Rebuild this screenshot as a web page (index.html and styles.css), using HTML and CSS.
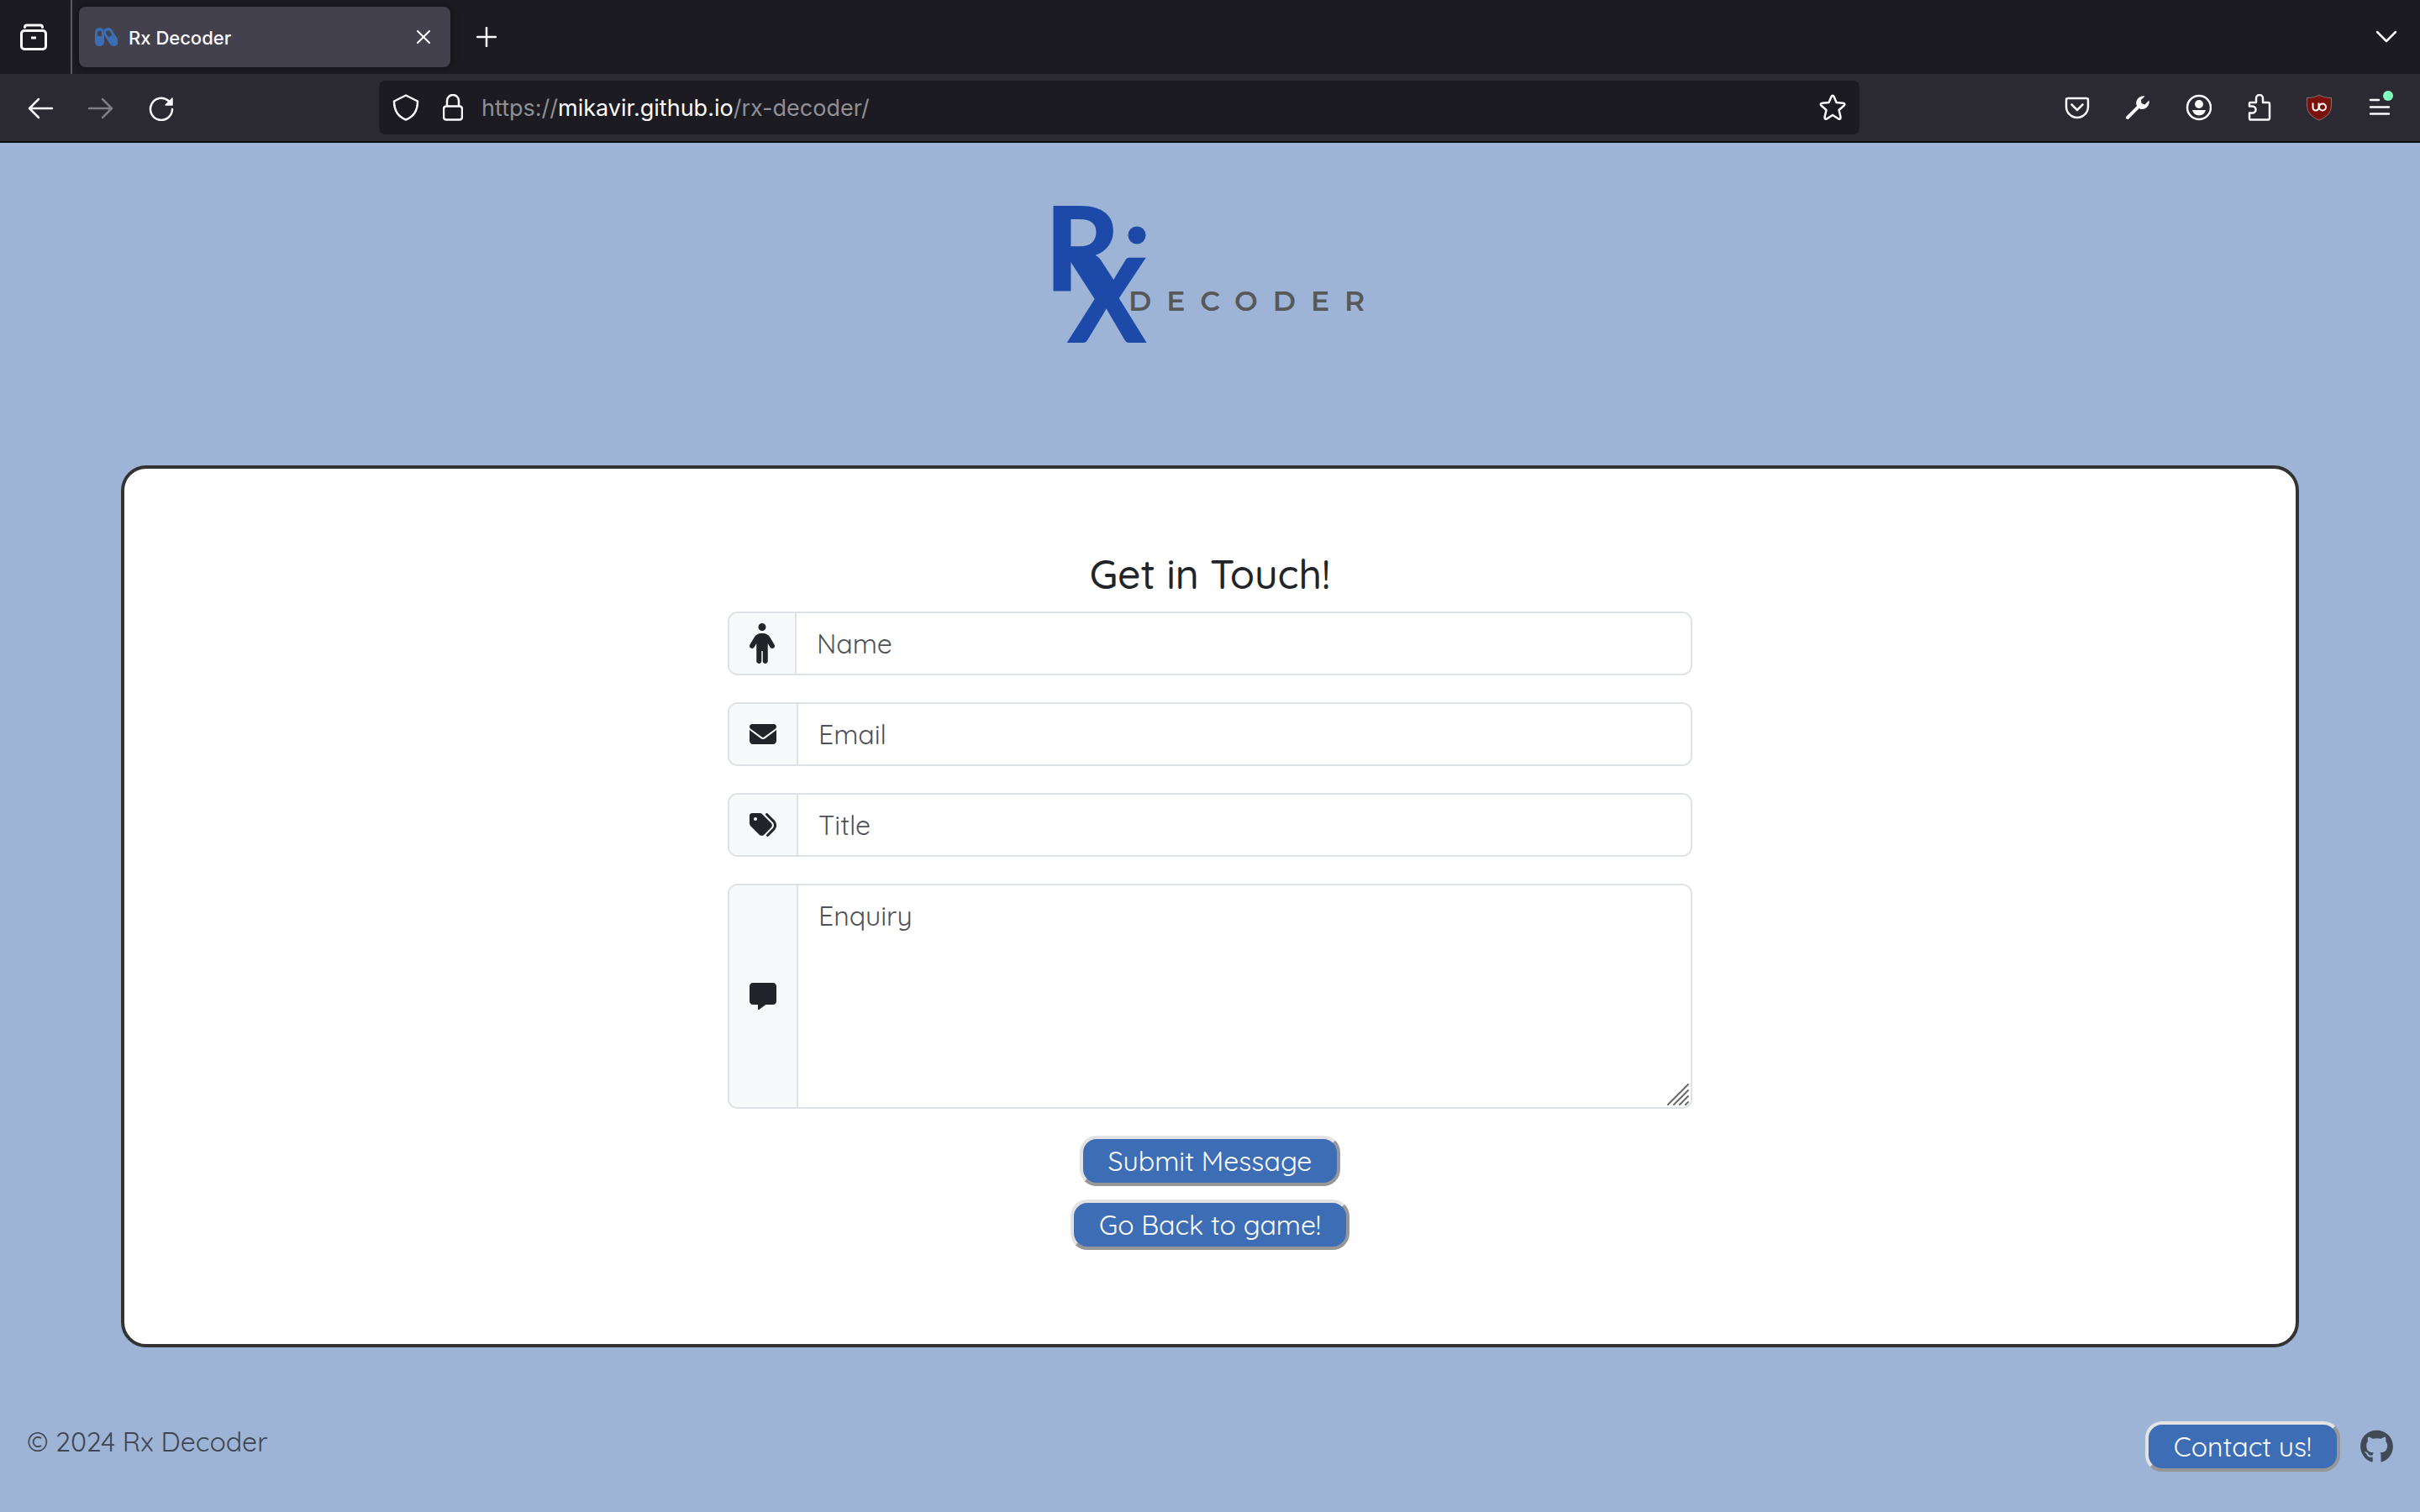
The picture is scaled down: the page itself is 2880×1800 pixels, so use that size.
FILE: index.html
```html
<!DOCTYPE html>
<html lang="en">
<head>
<meta charset="utf-8">
<title>Rx Decoder</title>
<link rel="stylesheet" href="styles.css">
</head>
<body>
<header class="browser">
  <div class="tabs">
    <button class="icon-btn view-btn" aria-label="Recent browsing">
      <svg width="32" height="32" viewBox="0 0 32 32" fill="none" stroke="currentColor" stroke-width="3" stroke-linecap="round"><path d="M5.500 4.500Q5.500 2 8 2H24Q26.500 2 26.500 4.500"/><rect x="1.500" y="8.500" width="29" height="22" rx="3.500"/><path d="M13 17H19" stroke-linecap="butt"/></svg>
    </button>
    <div class="tab">
      <svg class="favicon" width="28" height="28" viewBox="0 0 28 28"><rect x="1" y="3" width="11" height="22" rx="5.500" fill="#3c6eb5"/><path d="M4 13V9a2.500 2.500 0 0 1 5 0v4z" fill="#42414d"/><g transform="rotate(-33 20 14)"><rect x="14.500" y="2" width="11" height="24" rx="5.500" fill="#3c6eb5"/><path d="M17.500 13V8a2.500 2.500 0 0 1 5 0v5z" fill="#42414d"/></g></svg>
      <span class="tab-title">Rx Decoder</span>
      <button class="icon-btn" aria-label="Close tab"><svg width="16" height="16" viewBox="0 0 16 16" fill="none" stroke="currentColor" stroke-width="2" stroke-linecap="round"><path d="M1 1 15 15M15 1 1 15"/></svg></button>
    </div>
    <button class="icon-btn new-tab" aria-label="New tab"><svg width="24" height="24" viewBox="0 0 24 24" stroke="currentColor" stroke-width="2.500" stroke-linecap="round"><path d="M12 1V23M1 12H23"/></svg></button>
    <button class="icon-btn all-tabs" aria-label="List all tabs"><svg width="26" height="16" viewBox="0 0 26 16" fill="none" stroke="currentColor" stroke-width="2.500" stroke-linecap="round" stroke-linejoin="round"><path d="M2 2 13 13 24 2"/></svg></button>
  </div>
  <div class="toolbar">
    <div class="nav">
      <button class="icon-btn" aria-label="Back"><svg width="32" height="32" viewBox="0 0 32 32" fill="none" stroke="currentColor" stroke-width="2.500" stroke-linecap="round" stroke-linejoin="round"><path d="M30 17H3M14 6 3 17 14 28"/></svg></button>
      <button class="icon-btn" aria-label="Forward" disabled><svg width="32" height="32" viewBox="0 0 32 32" fill="none" stroke="currentColor" stroke-width="2.500" stroke-linecap="round" stroke-linejoin="round"><path d="M2 17H29M18 6 29 17 18 28"/></svg></button>
      <button class="icon-btn" aria-label="Reload"><svg width="32" height="32" viewBox="0 0 32 32" fill="none" stroke="currentColor" stroke-width="2.500" stroke-linecap="round"><path d="M24.500 8A13 13 0 1 0 29 18"/><path d="M29 5V13H21z" fill="currentColor" stroke-width="1.500" stroke-linejoin="round"/></svg></button>
    </div>
    <div class="urlbar">
      <svg width="32" height="32" viewBox="0 0 32 32" fill="none" stroke="currentColor" stroke-width="2.500" stroke-linejoin="round"><path d="M16 1.500 30 8.500C30 19 25 27 16 30.500 7 27 2 19 2 8.500z"/></svg>
      <svg width="24" height="32" viewBox="0 0 24 32" fill="none" stroke="currentColor" stroke-width="2.500"><path d="M5 14V8a7 7 0 0 1 14 0v6"/><rect x="1" y="14.500" width="22" height="16" rx="3"/></svg>
      <span class="url">https://<b>mikavir.github.io</b>/rx-decoder/</span>
      <button class="icon-btn" aria-label="Bookmark this page"><svg width="32" height="32" viewBox="0 0 32 32" fill="none" stroke="currentColor" stroke-width="2.500" stroke-linejoin="round"><path d="M14.500 3Q16 0.500 17.500 3L20.500 10 28.500 10.800Q31.500 11.500 29.500 13.800L23.500 19 25.500 27.500Q25.500 30.500 23 29.500L16 25 9 29.500Q6.500 30.500 6.500 27.500L8.500 19 2.500 13.800Q0.500 11.500 3.500 10.800L11.500 10z"/></svg></button>
    </div>
    <div class="tools">
      <button class="icon-btn" aria-label="Pocket"><svg width="32" height="32" viewBox="0 0 32 32" fill="none" stroke="currentColor" stroke-width="2.500" stroke-linecap="round" stroke-linejoin="round"><path d="M5 5H27Q29 5 29 7V15A13 13 0 0 1 3 15V7Q3 5 5 5z"/><path d="M9.500 12.500 16 19 22.500 12.500"/></svg></button>
      <button class="icon-btn" aria-label="Developer tools"><svg width="32" height="32" viewBox="0 0 32 32"><path d="M4 28 18 14" stroke="currentColor" stroke-width="4" stroke-linecap="round"/><path d="M24.500 2.500A8.500 8.500 0 0 0 14.500 13L18.500 17.500A8.500 8.500 0 0 0 29.500 7.500L24.500 12.500 20.500 11 20 7z" fill="currentColor"/></svg></button>
      <button class="icon-btn" aria-label="Account"><svg width="32" height="32" viewBox="0 0 32 32" fill="currentColor"><circle cx="17" cy="16" r="14" fill="none" stroke="currentColor" stroke-width="2.500"/><circle cx="17" cy="12" r="5"/><path d="M9 19H25Q23 25.500 17 25.500T9 19z"/></svg></button>
      <button class="icon-btn" aria-label="Extensions"><svg width="32" height="32" viewBox="0 0 32 32" fill="none" stroke="currentColor" stroke-width="2.500" stroke-linejoin="round"><path d="M6 10H13V5a4 4 0 0 1 8 0V10H27Q29 10 29 12V28.500Q29 30.500 27 30.500H6Q5 30.500 5 28.500V22.500H8.500a3.500 3.500 0 0 0 0-8H5V11Q5 10 6 10z"/></svg></button>
      <button class="icon-btn" aria-label="uBlock Origin"><svg width="32" height="32" viewBox="0 0 32 32"><path d="M16 .8Q21 4.500 30.500 4.500V14Q30.500 25 16 31.200 1.500 25 1.500 14V4.500Q11 4.500 16 .8z" fill="#7a110c" stroke="#85706f"/><path d="M8.500 10.500V16a3.500 3.500 0 0 0 7 0V10.500" fill="none" stroke="#fff" stroke-width="2"/><circle cx="20" cy="15.500" r="4" fill="none" stroke="#fff" stroke-width="2"/></svg></button>
      <button class="icon-btn menu-btn" aria-label="Menu"><svg width="32" height="32" viewBox="0 0 32 32" stroke="currentColor" stroke-width="2.500" stroke-linecap="round"><path d="M5 7H15M5 15.500H27M5 23.500H27"/></svg><i class="dot"></i></button>
    </div>
  </div>
</header>

<main>
  <a class="logo" href="#" aria-label="Rx Decoder home">
    <svg width="400" height="200" viewBox="0 0 400 200">
      <g class="mark"><text x="3" y="127">R</text><text x="30" y="188">X</text><circle cx="113" cy="60" r="10.500"/></g>
      <text class="wordmark" x="103" y="150">DECODER</text>
    </svg>
  </a>

  <section class="card">
    <h1>Get in Touch!</h1>
    <form>
      <div class="group">
        <label for="name" aria-label="Name"><svg width="30" height="48" viewBox="0 0 320 512"><path d="M112 48a48 48 0 1 1 96 0 48 48 0 1 1 -96 0zm40 304V480c0 17.700-14.300 32-32 32s-32-14.300-32-32V256.900L59.400 304.500c-9.100 15.100-28.800 20-43.900 10.900s-20-28.800-10.900-43.900l58.300-97c17.400-28.900 48.600-46.600 82.300-46.600h29.700c33.700 0 64.900 17.700 82.300 46.600l58.300 97c9.100 15.100 4.200 34.800-10.900 43.900s-34.800 4.200-43.900-10.900L232 256.900V480c0 17.700-14.300 32-32 32s-32-14.300-32-32V352H152z"/></svg></label>
        <input id="name" type="text" placeholder="Name">
      </div>
      <div class="group">
        <label for="email" aria-label="Email"><svg width="32" height="32" viewBox="0 0 512 512"><path d="M48 64C21.500 64 0 85.500 0 112c0 15.100 7.100 29.300 19.200 38.400L236.800 313.600c11.400 8.500 27 8.500 38.400 0L492.800 150.400c12.100-9.100 19.200-23.300 19.200-38.400c0-26.500-21.500-48-48-48H48zM0 176V384c0 35.300 28.700 64 64 64H448c35.300 0 64-28.700 64-64V176L294.400 339.200c-22.800 17.100-54 17.100-76.800 0L0 176z"/></svg></label>
        <input id="email" type="email" placeholder="Email">
      </div>
      <div class="group">
        <label for="title" aria-label="Title"><svg width="32" height="32" viewBox="0 0 512 512"><path d="M345 39.100L472.800 168.400c52.400 53 52.400 138.200 0 191.200L360.800 472.900c-9.300 9.400-24.500 9.500-33.900 .2s-9.500-24.500-.2-33.900L438.600 325.900c33.900-34.300 33.900-89.400 0-123.700L310.900 72.900c-9.300-9.400-9.200-24.600 .2-33.900s24.600-9.200 33.900 .2zM0 229.500V80C0 53.500 21.500 32 48 32H197.500c17 0 33.300 6.700 45.300 18.700l168 168c25 25 25 65.500 0 90.500L277.300 442.700c-25 25-65.500 25-90.500 0l-168-168C6.700 262.700 0 246.500 0 229.500zM144 144a32 32 0 1 0 -64 0 32 32 0 1 0 64 0z"/></svg></label>
        <input id="title" type="text" placeholder="Title">
      </div>
      <div class="group message">
        <label for="enquiry" aria-label="Enquiry"><svg width="32" height="32" viewBox="0 0 512 512"><path d="M64 0C28.700 0 0 28.700 0 64V352c0 35.300 28.700 64 64 64h96v80c0 6.100 3.400 11.600 8.800 14.300s11.900 2.100 16.800-1.500L309.300 416H448c35.300 0 64-28.700 64-64V64c0-35.300-28.700-64-64-64H64z"/></svg></label>
        <textarea id="enquiry" placeholder="Enquiry"></textarea>
        <svg class="grip" width="26" height="26" viewBox="0 0 26 26" stroke="#6b6b6b" stroke-width="2" stroke-linecap="round"><path d="M1 25 25 1M8 25 25 8M15 25 25 15M22 25 25 22"/></svg>
      </div>
      <div class="actions">
        <button class="btn" type="submit">Submit Message</button>
        <button class="btn" type="button">Go Back to game!</button>
      </div>
    </form>
  </section>
</main>

<footer>
  <p>© 2024 Rx Decoder</p>
  <div class="links">
    <button class="btn" type="button">Contact us!</button>
    <a href="#" aria-label="GitHub"><svg width="39" height="40" viewBox="0 0 496 512"><path d="M165.900 397.400c0 2-2.300 3.600-5.200 3.600-3.300.3-5.600-1.300-5.600-3.600 0-2 2.300-3.600 5.200-3.600 3-.3 5.600 1.300 5.600 3.600zm-31.100-4.500c-.7 2 1.300 4.300 4.300 4.900 2.600 1 5.600 0 6.200-2s-1.300-4.300-4.300-5.200c-2.600-.7-5.500.3-6.200 2.300zm44.200-1.700c-2.900.7-4.900 2.600-4.600 4.900.3 2 2.900 3.300 5.900 2.600 2.900-.7 4.900-2.600 4.600-4.600-.3-1.900-3-3.200-5.900-2.900zM244.800 8C106.100 8 0 113.300 0 252c0 110.900 69.800 205.800 169.500 239.200 12.800 2.300 17.300-5.600 17.300-12.100 0-6.200-.3-40.400-.3-61.400 0 0-70 15-84.700-29.800 0 0-11.400-29.100-27.800-36.600 0 0-22.900-15.700 1.600-15.400 0 0 24.900 2 38.600 25.800 21.900 38.600 58.600 27.500 72.900 20.900 2.300-16 8.800-27.100 16-33.700-55.900-6.200-112.300-14.300-112.300-110.500 0-27.500 7.600-41.300 23.600-58.900-2.600-6.500-11.100-33.300 3-67.900 20.900-6.500 69 27 69 27 20-5.600 41.500-8.500 62.800-8.500s42.800 2.900 62.800 8.500c0 0 48.100-33.600 69-27 13 34.700 5.600 61.400 3 67.900 16 17.700 25.800 31.500 25.800 58.900 0 96.500-58.900 104.200-114.800 110.500 9.200 7.900 17 22.900 17 46.400 0 33.700-.3 75.400-.3 83.600 0 6.500 4.600 14.400 17.300 12.100C428.200 457.800 496 362.900 496 252 496 113.300 383.500 8 244.800 8z"/></svg></a>
  </div>
</footer>
</body>
</html>
```
FILE: styles.css
```css
* { box-sizing: border-box; }

body {
  margin: 0;
  min-height: 100vh;
  display: flex;
  flex-direction: column;
  background: #9db4d7;
  color: #212529;
  font: 32px/48px Quicksand, Lato, sans-serif;
}

svg { display: block; flex: none; }

.icon-btn {
  position: relative;
  display: flex;
  padding: 0;
  border: 0;
  background: none;
  color: #fbfbfe;
}
.icon-btn:disabled { color: #7e7d84; }

/* Browser chrome */
.browser {
  border-bottom: 2px solid #0c0c0d;
  background: #2b2a33;
  color: #fbfbfe;
  font-family: Inter, sans-serif;
}
.tabs {
  display: flex;
  align-items: center;
  height: 88px;
  padding-right: 27px;
  background: #1c1b22;
}
.view-btn {
  height: 88px;
  padding: 28px 28px 28px 24px;
  border-right: 2px solid #5b5a62;
}
.tab {
  display: flex;
  align-items: center;
  width: 442px;
  height: 72px;
  margin-left: 8px;
  padding: 0 24px 0 18px;
  border-radius: 8px;
  background: #42414d;
  box-shadow: 0 0 8px rgba(0, 0, 0, 0.5);
}
.tab-title {
  flex: 1;
  margin-left: 13px;
  padding-top: 2px;
  font-size: 22px;
  font-weight: 500;
}
.new-tab { margin-left: 31px; }
.all-tabs { margin-left: auto; }

.toolbar {
  display: flex;
  align-items: center;
  height: 80px;
  padding: 0 32px;
}
.nav { display: flex; gap: 40px; width: 419px; }
.urlbar {
  display: flex;
  align-items: center;
  flex: 1;
  height: 64px;
  padding: 0 16px;
  border-radius: 8px;
  background: #1c1b22;
}
.urlbar svg + svg { margin-left: 28px; }
.url {
  flex: 1;
  margin-left: 22px;
  padding-top: 2px;
  color: #8f8f96;
  font-size: 27px;
}
.url b { color: #fbfbfe; font-weight: 400; }
.tools { display: flex; gap: 40px; margin-left: 243px; }
.dot {
  position: absolute;
  top: -4px;
  right: 0;
  width: 12px;
  height: 12px;
  border-radius: 50%;
  background: #80ffbd;
}

/* Logo */
main {
  display: flex;
  flex-direction: column;
  align-items: center;
  padding: 50px 5% 0;
}
.logo svg { overflow: visible; }
.mark { fill: #1d4aa8; font: 900 139px Lato, sans-serif; }
.wordmark {
  fill: #585858;
  font: 600 33px Montserrat, Lato, sans-serif;
  letter-spacing: 18px;
}

/* Contact card */
.card {
  width: 100%;
  margin-top: 134px;
  padding: 96px 48px 112px;
  border: 4px solid #333;
  border-radius: 30px;
  background: #fff;
}
h1 {
  margin: 0 0 16px;
  font-size: 48px;
  font-weight: 500;
  line-height: 58px;
  text-align: center;
}
form {
  display: flex;
  flex-direction: column;
  gap: 32px;
  max-width: 1148px;
  margin: 0 auto;
}
.group {
  position: relative;
  display: flex;
  min-height: 76px;
  border: 2px solid #dee2e6;
  border-radius: 12px;
  overflow: hidden;
}
.group label {
  display: flex;
  align-items: center;
  padding: 0 24px;
  border-right: 2px solid #dee2e6;
  background: #f8f9fa;
}
.group label svg { fill: #212529; }
.group input,
.group textarea {
  flex: 1;
  min-width: 0;
  padding: 12px 24px;
  border: 0;
  outline: 0;
  background: #fff;
  color: #212529;
  font: inherit;
}
.group ::placeholder { color: #505156; opacity: 1; }
.message { height: 268px; }
.message textarea { resize: none; }
.grip { position: absolute; right: 2px; bottom: 2px; pointer-events: none; }

.actions {
  display: flex;
  flex-direction: column;
  align-items: center;
  gap: 16px;
}
.btn {
  height: 60px;
  padding: 0 30px;
  border: 4px solid;
  border-color: #e3e3e3 #979797 #979797 #e3e3e3;
  border-radius: 20px;
  background: #3d6eb5;
  color: #fff;
  font: inherit;
}

footer {
  display: flex;
  align-items: center;
  justify-content: space-between;
  margin-top: auto;
  padding: 0 32px 48px;
  color: #3f4651;
}
footer p { margin: 0 0 12px; }
.links { display: flex; align-items: center; gap: 24px; }
.links a { fill: #414b57; }
```
